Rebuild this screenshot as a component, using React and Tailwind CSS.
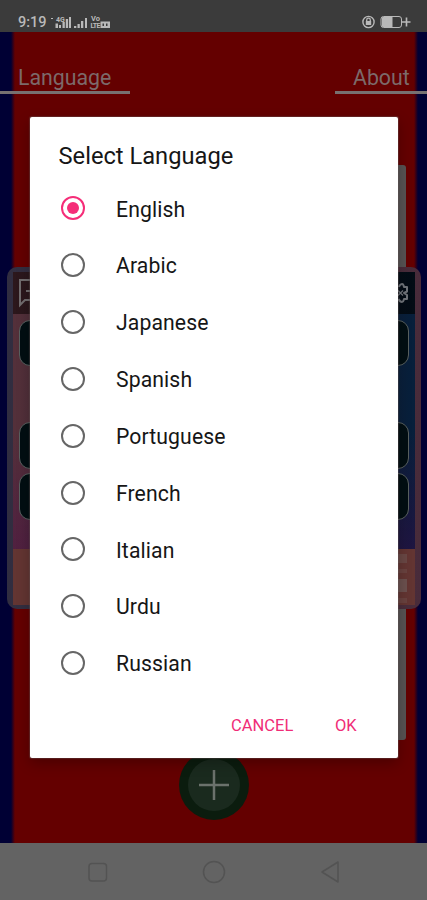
import React from "react";

const LANGUAGES = ["English", "Arabic", "Japanese", "Spanish", "Portuguese", "French", "Italian", "Urdu", "Russian"];

function StatusBar() {
  return (
    <header className="flex h-8 shrink-0 items-end justify-between bg-[#3b3b3b] pr-[16px] pb-[2px] pl-[18px] text-[#b9b9b9]">
      <div className="flex items-center">
        <span className="relative top-px w-[32px] text-[14.500px] leading-4 font-medium">9:19</span>
        <svg width="66" height="16" viewBox="0 0 66 16" fill="currentColor">
          <path d="M1 4h2v1H1zM9 11h2v3H9zM12.500 8h2.300v6h-2.300zM15.800 5h2.300v9h-2.300zM19 3h2v11h-2zM24 12h2.300v2H24zM27.500 10h2.300v4h-2.300zM31 7h2.300v7H31zM35 4h2v10h-2z" />
          <text x="6" y="8" fontSize="7" fontWeight="700">4G</text>
          <path d="M5.500 9.500h2.500V14H5.500z" />
          <text x="41" y="7" fontSize="7.500" fontWeight="700">Vo</text>
          <text x="40.500" y="14" fontSize="7" fontWeight="700" textLength="10">LTE</text>
          <path d="M50.500 7.500h9.500v6.500h-9.500zm2 2v2.500h1.500V9.500zm3.500 0v2.500h1.500V9.500z" fillRule="evenodd" />
        </svg>
      </div>
      <svg width="50" height="16" viewBox="0 0 50 16" fill="none" stroke="currentColor" className="mb-px">
        <circle cx="7.500" cy="9" r="5.600" strokeWidth="1.400" />
        <path d="M5.700 8V6.900a1.800 1.800 0 0 1 3.600 0V8" strokeWidth="1.300" />
        <path d="M4.800 8h5.400v4H4.800z" fill="currentColor" stroke="none" />
        <rect x="20" y="3.500" width="20.500" height="11" rx="2.500" />
        <path d="M22 4h9.500v10H22a1 1 0 0 1-1-1V5a1 1 0 0 1 1-1z" fill="currentColor" stroke="none" />
        <path d="M41 9h8.500M45.500 4.500v9" strokeWidth="1.600" />
      </svg>
    </header>
  );
}

function KeyRow({ className }) {
  return <div className={`mx-[6px] shrink-0 rounded-[11px] border border-[#596160] bg-[#020e12] ${className}`} />;
}

function KeyboardPreview() {
  return (
    <section className="mr-[6px] ml-[7px] h-[342px] rounded-[10px] bg-linear-to-r from-[#302d40] via-[#593b3f] to-[#482b3a] px-[6px] pt-[5px] pb-[4px]">
      <div className="flex h-[42px] items-center justify-between bg-linear-to-r from-[#2c171c] to-[#030c15] px-[5px]">
        <svg width="26" height="30" viewBox="0 0 26 30" fill="none" stroke="#716c6e" strokeWidth="2">
          <path d="M24 2H2v25l5-5h17M8 13h16M13 9v8" />
        </svg>
        <svg width="26" height="22" viewBox="0 0 26 22" fill="none" stroke="#70747a" strokeWidth="2" strokeLinejoin="round" className="mr-px">
          <path d="M16 5c1-3 2-3 3.500-3 1 0 1 1 1.500 3h3v4.500l-3 1.500 3 2v4h-3c-.5 2-.5 3-2 3s-2.500-1-3.500-3" />
          <path d="m15 8.500 5 5M20 8.500l-5 5" strokeWidth="1.300" />
        </svg>
      </div>
      <div className="flex h-[235px] flex-col bg-[linear-gradient(180deg,transparent_50%,#4b004c55),linear-gradient(90deg,#54303a,#071f3b)] pt-[6px]">
        <KeyRow className="h-[46px]" />
        <KeyRow className="mt-[56px] h-[47px]" />
        <KeyRow className="mt-[4px] h-[47px]" />
      </div>
      <div className="flex h-[56px] flex-col items-end gap-[6px] bg-[#633532] pt-[5px] pr-[8px]">
        <i className="h-[9px] w-6 bg-[#694744]" />
        <i className="h-[4px] w-6 bg-[#69423f]" />
        <i className="h-[13px] w-6 bg-[#6b504e]" />
        <i className="h-[5px] w-6 bg-[#69423f]" />
      </div>
    </section>
  );
}

function Dialog() {
  return (
    <div role="dialog" className="absolute top-[117px] left-[30px] flex h-[641px] w-[368px] flex-col rounded-[2px] bg-white text-[#161616] shadow-[0_5px_14px_#0004,0_0_1px_1px_#75636366]">
      <h1 className="h-[63px] pt-[24px] pl-[28.500px] text-[23.700px] leading-[30px] font-normal">Select Language</h1>
      <div className="flex flex-col">
        {LANGUAGES.map((name, i) => (
          <label key={name} className="flex h-[56.840px] items-center pl-[31px]">
            <span className={`flex size-6 items-center justify-center rounded-full border-2 ${i === 0 ? "border-[#f52d78]" : "border-[#666]"}`}>
              {i === 0 && <span className="size-[12px] rounded-full bg-[#f52d78]" />}
            </span>
            <span className="ml-[31px] pt-[2.400px] text-[21.200px] leading-7 tracking-[0.1px]">{name}</span>
          </label>
        ))}
      </div>
      <div className="flex pt-[23px] pl-[201px] text-[16.500px] leading-6 text-[#f02d77]">
        <button className="w-[104px] text-left">CANCEL</button>
        <button>OK</button>
      </div>
    </div>
  );
}

export default function App() {
  return (
    <div className="relative flex h-[900px] w-[427px] flex-col overflow-hidden font-[Roboto,sans-serif]">
      <StatusBar />
      <main className="flex h-[811px] shrink-0 flex-col bg-[linear-gradient(90deg,#000034_11px,#640000_15px,#640000_414px,#000034_418px)]">
        <nav className="flex h-[62px] items-end justify-between text-[21.300px] leading-7 text-[#7c6a6a]">
          <span className="h-[32px] w-[130px] border-b-[3px] border-[#777171] pt-[2px] pl-[18px]">Language</span>
          <span className="h-[32px] w-[92px] border-b-[3px] border-[#777171] pt-[2px] pl-[18px]">About</span>
        </nav>
        <div className="mt-[71px] h-[575px] w-[406px] shrink-0 rounded-r-[3px] bg-[linear-gradient(90deg,transparent_40px,#575353_40px)]">
          <div className="w-[427px] pt-[102px]">
            <KeyboardPreview />
          </div>
        </div>
        <div className="mx-auto mt-[10px] flex size-[70px] shrink-0 items-center justify-center rounded-full bg-[#0b1c0e]">
          <div className="flex size-[52px] items-center justify-center rounded-full bg-[#1a2a1e]">
            <svg width="30" height="30" viewBox="0 0 30 30" fill="none" stroke="#6b726c" strokeWidth="2.500">
              <path d="M15 0v30M0 15h30" />
            </svg>
          </div>
        </div>
      </main>
      <footer className="flex flex-1 items-center justify-center bg-[#636363]">
        <svg width="260" height="28" viewBox="0 0 260 28" fill="none" stroke="#535353" strokeWidth="1.500" strokeLinejoin="round">
          <rect x="5" y="5.500" width="17.500" height="17.500" rx="3" />
          <circle cx="130" cy="14" r="10.500" />
          <path d="M238 14 254 4v20z" />
        </svg>
      </footer>
      <Dialog />
    </div>
  );
}
